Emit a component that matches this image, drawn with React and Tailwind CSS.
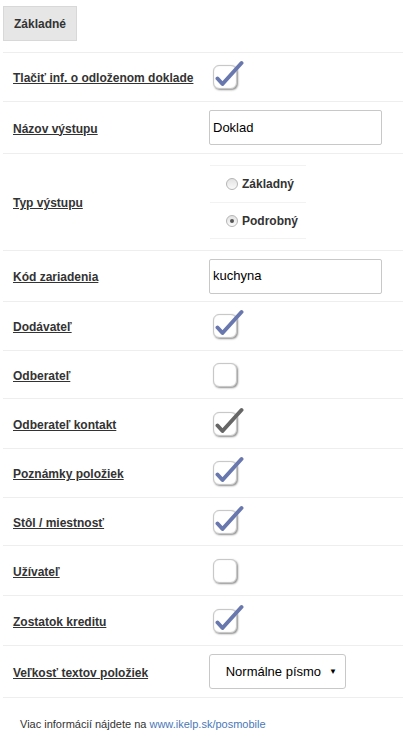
import React from "react";

const font = { fontFamily: '"Liberation Sans", Arial, sans-serif' };

function Label({ children }) {
  return (
    <div className="w-[196px] pl-[10px] shrink-0">
      <span className="text-[12px] font-bold underline text-[#333] leading-none">{children}</span>
    </div>
  );
}

function Check({ checked, gray }) {
  const color = gray ? "#666666" : "#6877ad";
  return (
    <div className="relative ml-[14px] w-[24px] h-[24px] rounded-[6px] bg-white border border-[#c8c8c8] shadow-[1px_1px_2px_rgba(0,0,0,0.45),inset_0_0_1px_rgba(0,0,0,0.2)]">
      {checked && (
        <svg className="absolute left-0 top-[-6px]" width="30" height="30" viewBox="0 0 30 30">
          <path d="M3.5 18.5 L8.5 24 L27.5 3" fill="none" stroke={color} strokeWidth="3.9" strokeLinecap="round" strokeLinejoin="round" />
        </svg>
      )}
    </div>
  );
}

function Row({ h, label, children }) {
  return (
    <div className={`flex items-center border-b border-[#eeeeee] ${h}`}>
      <Label>{label}</Label>
      {children}
    </div>
  );
}

function Radio({ checked }) {
  return (
    <span className="relative inline-block w-[12px] h-[12px] rounded-full border border-[#b5b5b5] bg-gradient-to-b from-[#e2e2e2] to-[#fafafa] mr-[4px]">
      {checked && <span className="absolute left-[3px] top-[3px] w-[4px] h-[4px] rounded-full bg-[#555]" />}
    </span>
  );
}

export default function App() {
  return (
    <div className="w-[420px] h-[741px] bg-white" style={font}>
      <div className="ml-[3px] w-[400px]">
        <div className="pt-[6px] pb-[11px] border-b border-[#eeeeee]">
          <div className="w-[74px] h-[35px] bg-[#e6e6e6] border border-[#d8d8d8] flex items-center justify-center text-[12px] font-bold text-[#333]">
            Základné
          </div>
        </div>
        <Row h="h-[49px]" label="Tlačiť inf. o odloženom doklade">
          <Check checked />
        </Row>
        <Row h="h-[52px]" label="Názov výstupu">
          <div className="ml-[10px] w-[173px] h-[35px] border border-[#c8c8c8] rounded-[2px] flex items-center pl-[3px] text-[13px] text-black">
            Doklad
          </div>
        </Row>
        <Row h="h-[97px]" label="Typ výstupu">
          <div className="ml-[11px] w-[96px] flex flex-col">
            <div className="h-[38px] border-t border-b border-[#f2f2f2] flex items-center pl-[16px] text-[12px] font-bold text-[#333]">
              <Radio />Základný
            </div>
            <div className="h-[36px] border-b border-[#f2f2f2] flex items-center pl-[16px] text-[12px] font-bold text-[#333]">
              <Radio checked />Podrobný
            </div>
          </div>
        </Row>
        <Row h="h-[51px]" label="Kód zariadenia">
          <div className="ml-[10px] w-[173px] h-[35px] border border-[#c8c8c8] rounded-[2px] flex items-center pl-[3px] text-[13px] text-black">
            kuchyna
          </div>
        </Row>
        <Row h="h-[49px]" label="Dodávateľ"><Check checked /></Row>
        <Row h="h-[48px]" label="Odberateľ"><Check /></Row>
        <Row h="h-[50px]" label="Odberateľ kontakt"><Check checked gray /></Row>
        <Row h="h-[49px]" label="Poznámky položiek"><Check checked /></Row>
        <Row h="h-[48px]" label="Stôl / miestnosť"><Check checked /></Row>
        <Row h="h-[50px]" label="Užívateľ"><Check /></Row>
        <Row h="h-[50px]" label="Zostatok kreditu"><Check checked /></Row>
        <Row h="h-[52px]" label="Veľkosť textov položiek">
          <div className="ml-[10px] w-[137px] h-[35px] border border-[#c8c8c8] rounded-[3px] flex items-center justify-end pr-[8px] text-[13px] text-black">
            Normálne písmo
            <span className="ml-[8px] text-[8px] leading-none">▼</span>
          </div>
        </Row>
        <div className="pt-[18px] pl-[17px] text-[11px] text-[#333]">
          Viac informácií nájdete na <span className="text-[#4a78b8]">www.ikelp.sk/posmobile</span>
        </div>
      </div>
    </div>
  );
}
